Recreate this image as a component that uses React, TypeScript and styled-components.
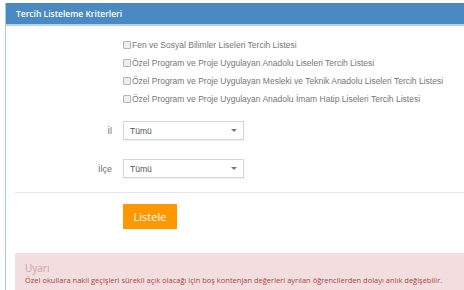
import React from "react";
import styled, { createGlobalStyle } from "styled-components";

const Global = createGlobalStyle`
  html, body { margin: 0; padding: 0; background: #fff; overflow: hidden; }
  body { width: 464px; height: 290px; }
`;

const Panel = styled.section`
  margin: 3px 0 0 5px;
  width: 480px;
  border-left: 1px solid #a9c8e4;
  border-right: 1px solid #a9c8e4;
  box-sizing: border-box;
  font-family: "Open Sans", sans-serif;
`;

const Header = styled.div`
  height: 21px;
  background: #4a89c1;
  border-bottom: 2px solid #b5d2ec;
  display: flex;
  align-items: center;
  padding-left: 10px;
  color: #fff;
  font-size: 8.5px;
  font-weight: 600;
`;

const Body = styled.div`
  padding: 10px 0 0 9px;
`;

const CheckList = styled.div`
  display: flex;
  flex-direction: column;
  padding-left: 108px;
`;

const CheckRow = styled.label`
  display: flex;
  align-items: center;
  height: 18px;
  font-family: "Liberation Sans", Arial, sans-serif;
  font-size: 8.5px;
  color: #777;
`;

const Box = styled.span`
  width: 6px;
  height: 6px;
  border: 1px solid #b5b5b5;
  background: #eee;
  border-radius: 1px;
  margin-right: 1px;
`;

const FormGrid = styled.div`
  display: grid;
  grid-template-columns: 97px 121px;
  column-gap: 11px;
  row-gap: 19px;
  align-items: center;
  margin-top: 13px;
`;

const Label = styled.div`
  text-align: right;
  font-family: "Liberation Sans", Arial, sans-serif;
  font-size: 9px;
  color: #707070;
`;

const Select = styled.div`
  height: 19px;
  box-sizing: border-box;
  border: 1px solid #d5d5d5;
  box-shadow: 0 1px 1px rgba(0, 0, 0, 0.06);
  display: flex;
  align-items: center;
  justify-content: space-between;
  padding: 0 6px;
  font-family: "Liberation Sans", Arial, sans-serif;
  font-size: 8.5px;
  color: #555;
`;

const Arrow = styled.span`
  width: 0;
  height: 0;
  border-left: 3px solid transparent;
  border-right: 3px solid transparent;
  border-top: 3px solid #777;
`;

const Divider = styled.hr`
  border: 0;
  border-top: 1px solid #e5e5e5;
  margin: 14px 0 0 0;
`;

const ButtonRow = styled.div`
  padding: 11px 0 0 108px;
`;

const Button = styled.button`
  width: 54px;
  height: 25px;
  background: #ff9800;
  border: 0;
  color: #fff;
  font-family: "Open Sans", sans-serif;
  font-size: 11px;
  padding: 0;
`;

const Alert = styled.div`
  margin-top: 24px;
  background: #f2dede;
  padding: 9px 10px 10px;
  font-size: 7.5px;
`;

const AlertTitle = styled.div`
  color: #c9a3a3;
  font-size: 10px;
  line-height: 12px;
`;

const AlertText = styled.div`
  color: #a94442;
  line-height: 12px;
`;

const options = [
  "Fen ve Sosyal Bilimler Liseleri Tercih Listesi",
  "Özel Program ve Proje Uygulayan Anadolu Liseleri Tercih Listesi",
  "Özel Program ve Proje Uygulayan Mesleki ve Teknik Anadolu Liseleri Tercih Listesi",
  "Özel Program ve Proje Uygulayan Anadolu İmam Hatip Liseleri Tercih Listesi",
];

export default function App() {
  return (
    <>
      <Global />
      <Panel>
        <Header>Tercih Listeleme Kriterleri</Header>
        <Body>
          <CheckList>
            {options.map((o) => (
              <CheckRow key={o}>
                <Box />
                {o}
              </CheckRow>
            ))}
          </CheckList>
          <FormGrid>
            <Label>İl</Label>
            <Select>
              Tümü
              <Arrow />
            </Select>
            <Label>İlçe</Label>
            <Select>
              Tümü
              <Arrow />
            </Select>
          </FormGrid>
          <Divider />
          <ButtonRow>
            <Button>Listele</Button>
          </ButtonRow>
          <Alert>
            <AlertTitle>Uyarı</AlertTitle>
            <AlertText>
              Özel okullara nakil geçişleri sürekli açık olacağı için boş kontenjan değerleri ayrılan öğrencilerden dolayı anlık değişebilir.
            </AlertText>
          </Alert>
        </Body>
      </Panel>
    </>
  );
}
